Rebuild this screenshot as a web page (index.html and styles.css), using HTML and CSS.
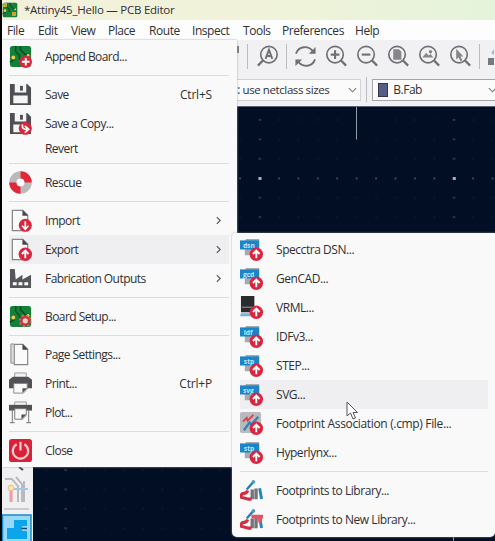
FILE: index.html
```html
<!DOCTYPE html>
<html lang="en">
<head>
<meta charset="utf-8">
<title>PCB Editor</title>
<link rel="stylesheet" href="styles.css">
</head>
<body>
<svg class="defs" width="0" height="0">
  <defs>
    <symbol id="up" viewBox="0 0 24 24"><circle cx="17" cy="17" r="7" fill="#d9263e"/><path d="M17 21.2v-7M13.500 16.700l3.500-3.500 3.500 3.500" fill="none" stroke="#fff" stroke-width="2"/></symbol>
    <symbol id="board" viewBox="0 0 24 24"><rect x="1" y="1" width="22" height="22" rx="2.5" fill="#15803a"/><path d="M7 1v6l4 4v4M12 1v4l5 5h5M1 18l5-3" fill="none" stroke="#075420" stroke-width="1.7"/><circle cx="4.500" cy="13" r="2" fill="#e8cf54"/><circle cx="20" cy="11" r="1.500" fill="#e8cf54"/></symbol>
    <symbol id="floppy" viewBox="0 0 24 24"><path d="M1 1h18l4 4v18H1z" fill="#4d4f53"/><path d="M6 1h12v9H6zM4.500 13h15v8h-15z" fill="#f5f5f6"/><path d="M11.500 3h3v5h-3z" fill="#4d4f53"/></symbol>
    <symbol id="page" viewBox="0 0 24 24"><path d="M3.500 1.500h11l5 5v16h-16z" fill="#fafafa" stroke="#85868a" stroke-width="1.300"/><path d="M14 1l6 6h-6z" fill="#45464a"/></symbol>
    <symbol id="format" viewBox="0 0 24 24"><path d="M6 1h14v17H5V6z" fill="#a8aaad"/><rect x="0" y="2.500" width="20" height="9.500" fill="#1a86c8"/></symbol>
    <symbol id="lens" viewBox="0 0 24 24"><circle cx="10.500" cy="10" r="8.600" fill="#f1f0f2" stroke="#6f7073" stroke-width="1.700"/><path d="M16.500 16l5.500 5.500" stroke="#6f7073" stroke-width="2.300"/></symbol>
    <symbol id="books" viewBox="0 0 24 24"><path d="M11 11h3.500v10H11zM15 10h3.500v11H15z" fill="#73757b"/><path d="M19 10l3-.5 2 11-3 .5z" fill="#2087be"/><path d="M7 11l7-8" stroke="#267fb5" stroke-width="2.400"/><circle cx="14" cy="3" r="1.900" fill="#4b9bc8"/><path d="M8 12q-1 3-4 3-3 0-3 4l8 2h3" fill="none" stroke="#d42c44" stroke-width="3.200"/></symbol>
    <pattern id="minor" x="249.800" y="168.500" width="19.420" height="19.450" patternUnits="userSpaceOnUse"><rect x="9.200" y="9.200" width="1.200" height="1.200" fill="#15243c"/></pattern>
    <pattern id="major" x="162.800" y="168.500" width="194.200" height="19.450" patternUnits="userSpaceOnUse"><rect x="96" y="9" width="2.200" height="1.400" fill="#3a4a5c"/></pattern>
    <pattern id="row" x="249.800" y="168.500" width="19.420" height="20" patternUnits="userSpaceOnUse"><rect x="9" y="9" width="1.500" height="1.800" fill="#4a5b6d"/></pattern>
  </defs>
</svg>
<main class="app">
  <header class="title">
    <svg class="title-icon"><use href="#board"/><path d="M1 1h4v4H1zM10 10h4v4h-4z" fill="#c7a52a"/></svg>
    <span>*Attiny45_Hello — PCB Editor</span>
  </header>
  <nav class="menubar"><span class="m1">File</span><span class="m2">Edit</span><span class="m3">View</span><span class="m4">Place</span><span class="m5">Route</span><span class="m6">Inspect</span><span class="m7">Tools</span><span class="m8">Preferences</span><span>Help</span></nav>
  <section class="toolbar">
    <i class="nub"></i><i class="rule"></i>
    <svg class="tool flip" viewBox="0 0 24 24"><g transform="matrix(-1 0 0 1 24 0)"><use href="#lens"/></g><path d="M10 14.500L13.500 5l3.500 9.500M11.500 11.500h4" fill="none" stroke="#6f7073" stroke-width="2"/></svg>
    <i class="rule"></i>
    <svg class="tool first" viewBox="0 0 24 24"><path d="M2 9C5 1 15 0 20 7M22 15C19 23 9 24 4 17" fill="none" stroke="#6f7073" stroke-width="1.900"/><path d="M22.500 2v7h-7zM1.500 22v-7h7z" fill="#6f7073"/></svg>
    <svg class="tool" viewBox="0 0 24 24"><use href="#lens"/><path d="M6 10h9M10.500 5.500v9" stroke="#6f7073" stroke-width="2.200"/></svg>
    <svg class="tool" viewBox="0 0 24 24"><use href="#lens"/><path d="M6 10h9" stroke="#6f7073" stroke-width="2.200"/></svg>
    <svg class="tool" viewBox="0 0 24 24"><use href="#lens"/><path d="M6.500 4.500h6l2.500 2.500v8.500H6.500z" fill="#858689"/></svg>
    <svg class="tool" viewBox="0 0 24 24"><use href="#lens"/><path d="M4.500 13l4-5 2.500 3 2-1.500 3 3.500z" fill="#858689"/><circle cx="13" cy="7" r="1.800" fill="#858689"/></svg>
    <svg class="tool" viewBox="0 0 24 24"><use href="#lens"/><path d="M7.500 4v11l2.500-2 2 4 2-1-2-4h3z" fill="#858689"/></svg>
    <i class="rule last"></i>
    <svg class="edge-tool" viewBox="0 0 6 24"><path d="M0 13h6v7H0z" fill="#77797d"/><path d="M3 8l3-4v6z" fill="#8bc5e6"/></svg>
  </section>
  <section class="options">
    <div class="combo sizes"><span><b>:</b> use netclass sizes</span><svg class="down" viewBox="0 0 10 6"><path d="M1 1l4 4 4-4" fill="none" stroke="#777" stroke-width="1.200"/></svg></div>
    <i class="rule"></i>
    <div class="combo layer"><i class="swatch"></i><span>B.Fab</span><svg class="down" viewBox="0 0 10 6"><path d="M1 1l4 4 4-4" fill="none" stroke="#777" stroke-width="1.200"/></svg></div>
  </section>
  <svg class="canvas" viewBox="33 106 462 435">
    <path d="M33 106h462v435H33z" fill="#010e24"/>
    <path d="M33 106h462v435H33z" fill="url(#minor)"/>
    <path d="M33 106h462v435H33z" fill="url(#major)"/>
    <path d="M237 176h258v5H237z" fill="url(#row)"/>
    <path d="M258.500 177h3v3h-3zM452.800 177h3v3h-3z" fill="#a3adb9"/>
    <path d="M356.500 107v32.500M453.500 536v5" stroke="#919aa6"/>
    <path d="M33 106.500h462" stroke="#596273"/>
  </svg>
  <aside class="palette">
    <svg class="palette-icons" viewBox="0 0 31 74"><path d="M17 0l4 3" stroke="#444" stroke-width="2"/><path d="M3 12h7l6 7v16M14 10l6 7v18M22 14v21" fill="none" stroke="#b9babf" stroke-width="2"/><path d="M9 22h17" stroke="#9fc9e4" stroke-width="2"/><path d="M9 23v12" stroke="#f199a5" stroke-width="3"/><circle cx="9" cy="21" r="3" fill="#ffe4a4" stroke="#e8bb91"/><path d="M2 42h25" stroke="#aaa"/><rect x=".5" y="48" width="28.500" height="32" fill="#9bd8f5" stroke="#168dcb" stroke-width="1.500"/><path d="M12 53h13v6h-4q-4 3 0 5h4v8H5V61h7z" fill="#0aa5ea"/><path d="M19 61.500h6" stroke="#174766" stroke-width="1.500"/></svg>
  </aside>

  <div class="menu file-menu">
    <div class="item"><svg viewBox="0 0 24 24"><use href="#board"/><circle cx="17.500" cy="17.500" r="6.500" fill="#d9263e"/><path d="M13.500 17.500h8M17.500 13.500v8" stroke="#fff" stroke-width="2"/></svg><span>Append Board...</span></div>
    <hr>
    <div class="item"><svg viewBox="0 0 24 24"><use href="#floppy"/></svg><span>Save</span><kbd>Ctrl+S</kbd></div>
    <div class="item"><svg viewBox="0 0 24 24"><use href="#floppy"/><circle cx="17" cy="17" r="6.800" fill="#d9263e"/><path d="M14 13v2q0 3 5 3M16.500 14.500l4 3.500-4 3.500" fill="none" stroke="#fff" stroke-width="1.800"/></svg><span>Save a Copy...</span></div>
    <div class="item short"><svg></svg><span>Revert</span></div>
    <hr>
    <div class="item"><svg viewBox="0 0 24 24"><circle cx="12" cy="12" r="8" fill="none" stroke="#bababc" stroke-width="7.500"/><path d="M12 4a8 8 0 0 1 8 8M12 20a8 8 0 0 1-8-8" fill="none" stroke="#df2939" stroke-width="7.500"/></svg><span>Rescue</span></div>
    <hr>
    <div class="item"><svg viewBox="0 0 24 24"><use href="#page"/><circle cx="17" cy="17" r="6.800" fill="#d9263e"/><path d="M17 12.800v7M13.700 17.500l3.300 3.500 3.300-3.500" fill="none" stroke="#fff" stroke-width="1.800"/></svg><span>Import</span><svg class="more" viewBox="0 0 6 10"><path d="M1 1l4 4-4 4"/></svg></div>
    <div class="item active"><svg viewBox="0 0 24 24"><use href="#page"/><use href="#up"/></svg><span>Export</span><svg class="more" viewBox="0 0 6 10"><path d="M1 1l4 4-4 4"/></svg></div>
    <div class="item"><svg viewBox="0 0 24 24"><path d="M1 2h5l1 11 7-5v5l9-5v14H1z" fill="#55575a"/><path d="M4 16h4v3H4zM10 16h4v3h-4zM16 16h4v3h-4z" fill="#fff"/></svg><span>Fabrication Outputs</span><svg class="more" viewBox="0 0 6 10"><path d="M1 1l4 4-4 4"/></svg></div>
    <hr>
    <div class="item"><svg viewBox="0 0 24 24"><use href="#board"/><circle cx="17" cy="16.500" r="4" fill="#e8d2cb" stroke="#c9333f" stroke-width="2.500"/><circle cx="17" cy="16.500" r="5.800" fill="none" stroke="#dc6a68" stroke-width="1.800" stroke-dasharray="2.300 2.250"/></svg><span>Board Setup...</span></div>
    <hr>
    <div class="item"><svg viewBox="0 0 24 24"><path d="M5 1H2v20h3" fill="#ddd" stroke="#888"/><path d="M5.500 1.500h9l5 5v16h-14z" fill="#fafafa" stroke="#85868a" stroke-width="1.200"/><path d="M14 1l6 6h-6z" fill="#45464a"/></svg><span>Page Settings...</span></div>
    <div class="item"><svg viewBox="0 0 24 24"><path d="M6 6V1h12v5" fill="#f3f3f3" stroke="#999"/><path d="M4 5h16l4 3v9H0V8z" fill="#505256"/><path d="M5 12h14v6l-4 4H5z" fill="#fafafa" stroke="#888"/><path d="M14 22l5-5h-5z" fill="#505256"/></svg><span>Print...</span><kbd>Ctrl+P</kbd></div>
    <div class="item"><svg viewBox="0 0 24 24"><path d="M6 4V1h12v3" fill="#f3f3f3" stroke="#999"/><path d="M0 4h24v6H0z" fill="#505256"/><path d="M3.500 10v12M20.500 10v12M1 22.500h5M18 22.500h5" stroke="#888" stroke-width="1.200"/><path d="M6 8h12v7l-4 4H6z" fill="#fafafa" stroke="#777"/><path d="M13 19l5-5h-5z" fill="#505256"/></svg><span>Plot...</span></div>
    <hr>
    <div class="item"><svg viewBox="0 0 24 24"><rect width="24" height="24" rx="3" fill="#da2137"/><path d="M8 5.500a8 8 0 1 0 8 0" fill="none" stroke="#f7cbd0" stroke-width="2.300"/><path d="M12 3v9" stroke="#f7cbd0" stroke-width="2.300"/></svg><span>Close</span></div>
  </div>

  <div class="menu sub-menu">
    <div class="item"><svg viewBox="0 0 24 24"><use href="#format"/><text x="3" y="10">dsn</text><use href="#up"/></svg><span>Specctra DSN...</span></div>
    <div class="item"><svg viewBox="0 0 24 24"><use href="#format"/><text x="3" y="10">gcd</text><use href="#up"/></svg><span>GenCAD...</span></div>
    <div class="item"><svg viewBox="0 0 24 24"><path d="M1 0h14v17H1z" fill="#292b2f"/><path d="M2 11h13v1.500H2z" fill="#777"/><path d="M1 18h10v3H0z" fill="#6eb6dd"/><use href="#up"/></svg><span>VRML...</span></div>
    <div class="item"><svg viewBox="0 0 24 24"><use href="#format"/><text x="4" y="10">idf</text><use href="#up"/></svg><span>IDFv3...</span></div>
    <div class="item"><svg viewBox="0 0 24 24"><use href="#format"/><text x="4" y="10">stp</text><use href="#up"/></svg><span>STEP...</span></div>
    <div class="item active"><svg viewBox="0 0 24 24"><use href="#format"/><text x="3" y="10">svg</text><use href="#up"/></svg><span>SVG...</span></div>
    <div class="item"><svg viewBox="0 0 24 24"><rect x="0" y="0" width="22" height="22" rx="2" fill="#b9babd"/><path d="M3 10l4-4 1 3 6-6" fill="none" stroke="#d84450" stroke-width="2"/><path d="M4 19l6-8 2 2 7-8" fill="none" stroke="#3681b8" stroke-width="2.500"/><use href="#up"/></svg><span class="wide">Footprint Association (.cmp) File...</span></div>
    <div class="item"><svg viewBox="0 0 24 24"><use href="#format"/><text x="4" y="10">stp</text><use href="#up"/></svg><span>Hyperlynx...</span></div>
    <hr>
    <div class="item"><svg viewBox="0 0 24 24"><use href="#books"/></svg><span>Footprints to Library...</span></div>
    <div class="item"><svg viewBox="0 0 24 24"><use href="#books"/><path d="M12 7h12v4H12zM19 11h4v4h-4z" fill="#e45462"/></svg><span>Footprints to New Library...</span></div>
  </div>
  <svg class="cursor" viewBox="0 0 12 19"><path d="M1 1v14l3.500-3 2.500 6 2.500-1L7 11.500h4.500z" fill="#fff" stroke="#555"/></svg>
</main>
</body>
</html>
```

FILE: styles.css
```css
* { box-sizing: border-box; }
body { margin: 0; overflow: hidden; background: #000; font: 12px/16px "Open Sans", "Noto Sans", sans-serif; letter-spacing: -.45px; color: #303034; }
.defs { position: absolute; }
.app { position: relative; display: flex; flex-direction: column; width: 495px; height: 541px; padding-left: 2px; background: #f1f0f2; }
.app::before { content: ""; position: absolute; inset: 0 auto 0 0; width: 2px; background: #000; z-index: 5; }
.title { display: flex; align-items: center; gap: 6px; height: 20px; background: linear-gradient(90deg, #f3f0dc, #f0f3d9 55%, #e5f3dc); font-size: 11.5px; letter-spacing: -.25px; }
.title-icon { width: 16px; height: 16px; flex: none; margin-top: -1px; }
.menubar { display: flex; align-items: center; height: 20px; padding: 1px 0 0 5px; background: #fdfdfe; }
.menubar span { flex: none; white-space: nowrap; }
.m1 { width: 31px; } .m2 { width: 33px; } .m3 { width: 37px; } .m4 { width: 41px; } .m5 { width: 43px; } .m6 { width: 51px; } .m7 { width: 39px; } .m8 { width: 73px; }
.toolbar { display: flex; align-items: center; height: 33px; padding-left: 235px; }
.toolbar > * { flex: none; }
.nub { width: 2px; height: 7px; margin: -14px 8px 0 0; background: #77787a; }
.rule { width: 1px; height: 25px; background: #bdbcc0; }
.tool { width: 23px; height: 23px; margin-right: 8px; }
.flip { margin: 0 7px 0 8px; }
.first { margin-left: 7px; }
.last { margin-left: -1px; }
.edge-tool { width: 6px; height: 24px; margin-left: 8px; }
.options { display: flex; align-items: center; height: 33px; padding-left: 235px; }
.options > * { flex: none; }
.combo { display: flex; align-items: center; height: 22px; background: #fbfbfc; border: 1px solid #d2d1d5; white-space: nowrap; }
.sizes { width: 124px; padding: 0 3px 0 0; border-left: 0; justify-content: space-between; margin-right: 5px; letter-spacing: -.4px; font-size: 11.5px; }
.sizes b { color: #328cb4; }
.layer { width: 126px; margin-left: 5px; padding-left: 5px; border-color: #a5a4a8; }
.swatch { width: 14px; height: 14px; margin-right: 5px; background: #565c88; border: 1px solid #333750; }
.down { width: 9px; height: 6px; flex: none; }
.layer .down { margin-left: 66px; }
.canvas { display: block; width: 462px; height: 435px; margin-left: 31px; }
.palette { position: absolute; left: 2px; top: 467px; width: 31px; height: 74px; background: #f0eff2; }
.palette-icons { display: block; width: 31px; height: 74px; }
.menu { position: absolute; background: #f9f9fa; box-shadow: 0 0 2px #a6a5ac; }
.file-menu { left: 2px; top: 40px; width: 235px; height: 427px; padding: 2px 8px 2px 7px; letter-spacing: -.56px; }
.sub-menu { left: 232px; top: 233px; width: 263px; height: 304px; padding: 2px 7px 3px 8px; border-radius: 3px 0 5px 5px; }
.item { display: flex; align-items: center; height: 29px; white-space: nowrap; }
.item > svg { width: 23px; height: 23px; flex: none; margin-right: 13px; }
.item.short { height: 21px; }
.item.active { background: #efeef0; }
.item .wide { letter-spacing: -.34px; }
.item text { font: 700 7px "Open Sans", sans-serif; fill: #bfe5ff; letter-spacing: 0; }
.item kbd { margin: 0 17px 0 auto; font: inherit; letter-spacing: -.2px; }
.item > .more { width: 5px; height: 9px; margin: 0 8px 0 auto; fill: none; stroke: #555; stroke-width: 1.4; }
.menu hr { height: 1px; margin: 4px 0; border: 0; background: #dcdbdd; }
.cursor { position: absolute; left: 346px; top: 401px; width: 12px; height: 19px; }
```
